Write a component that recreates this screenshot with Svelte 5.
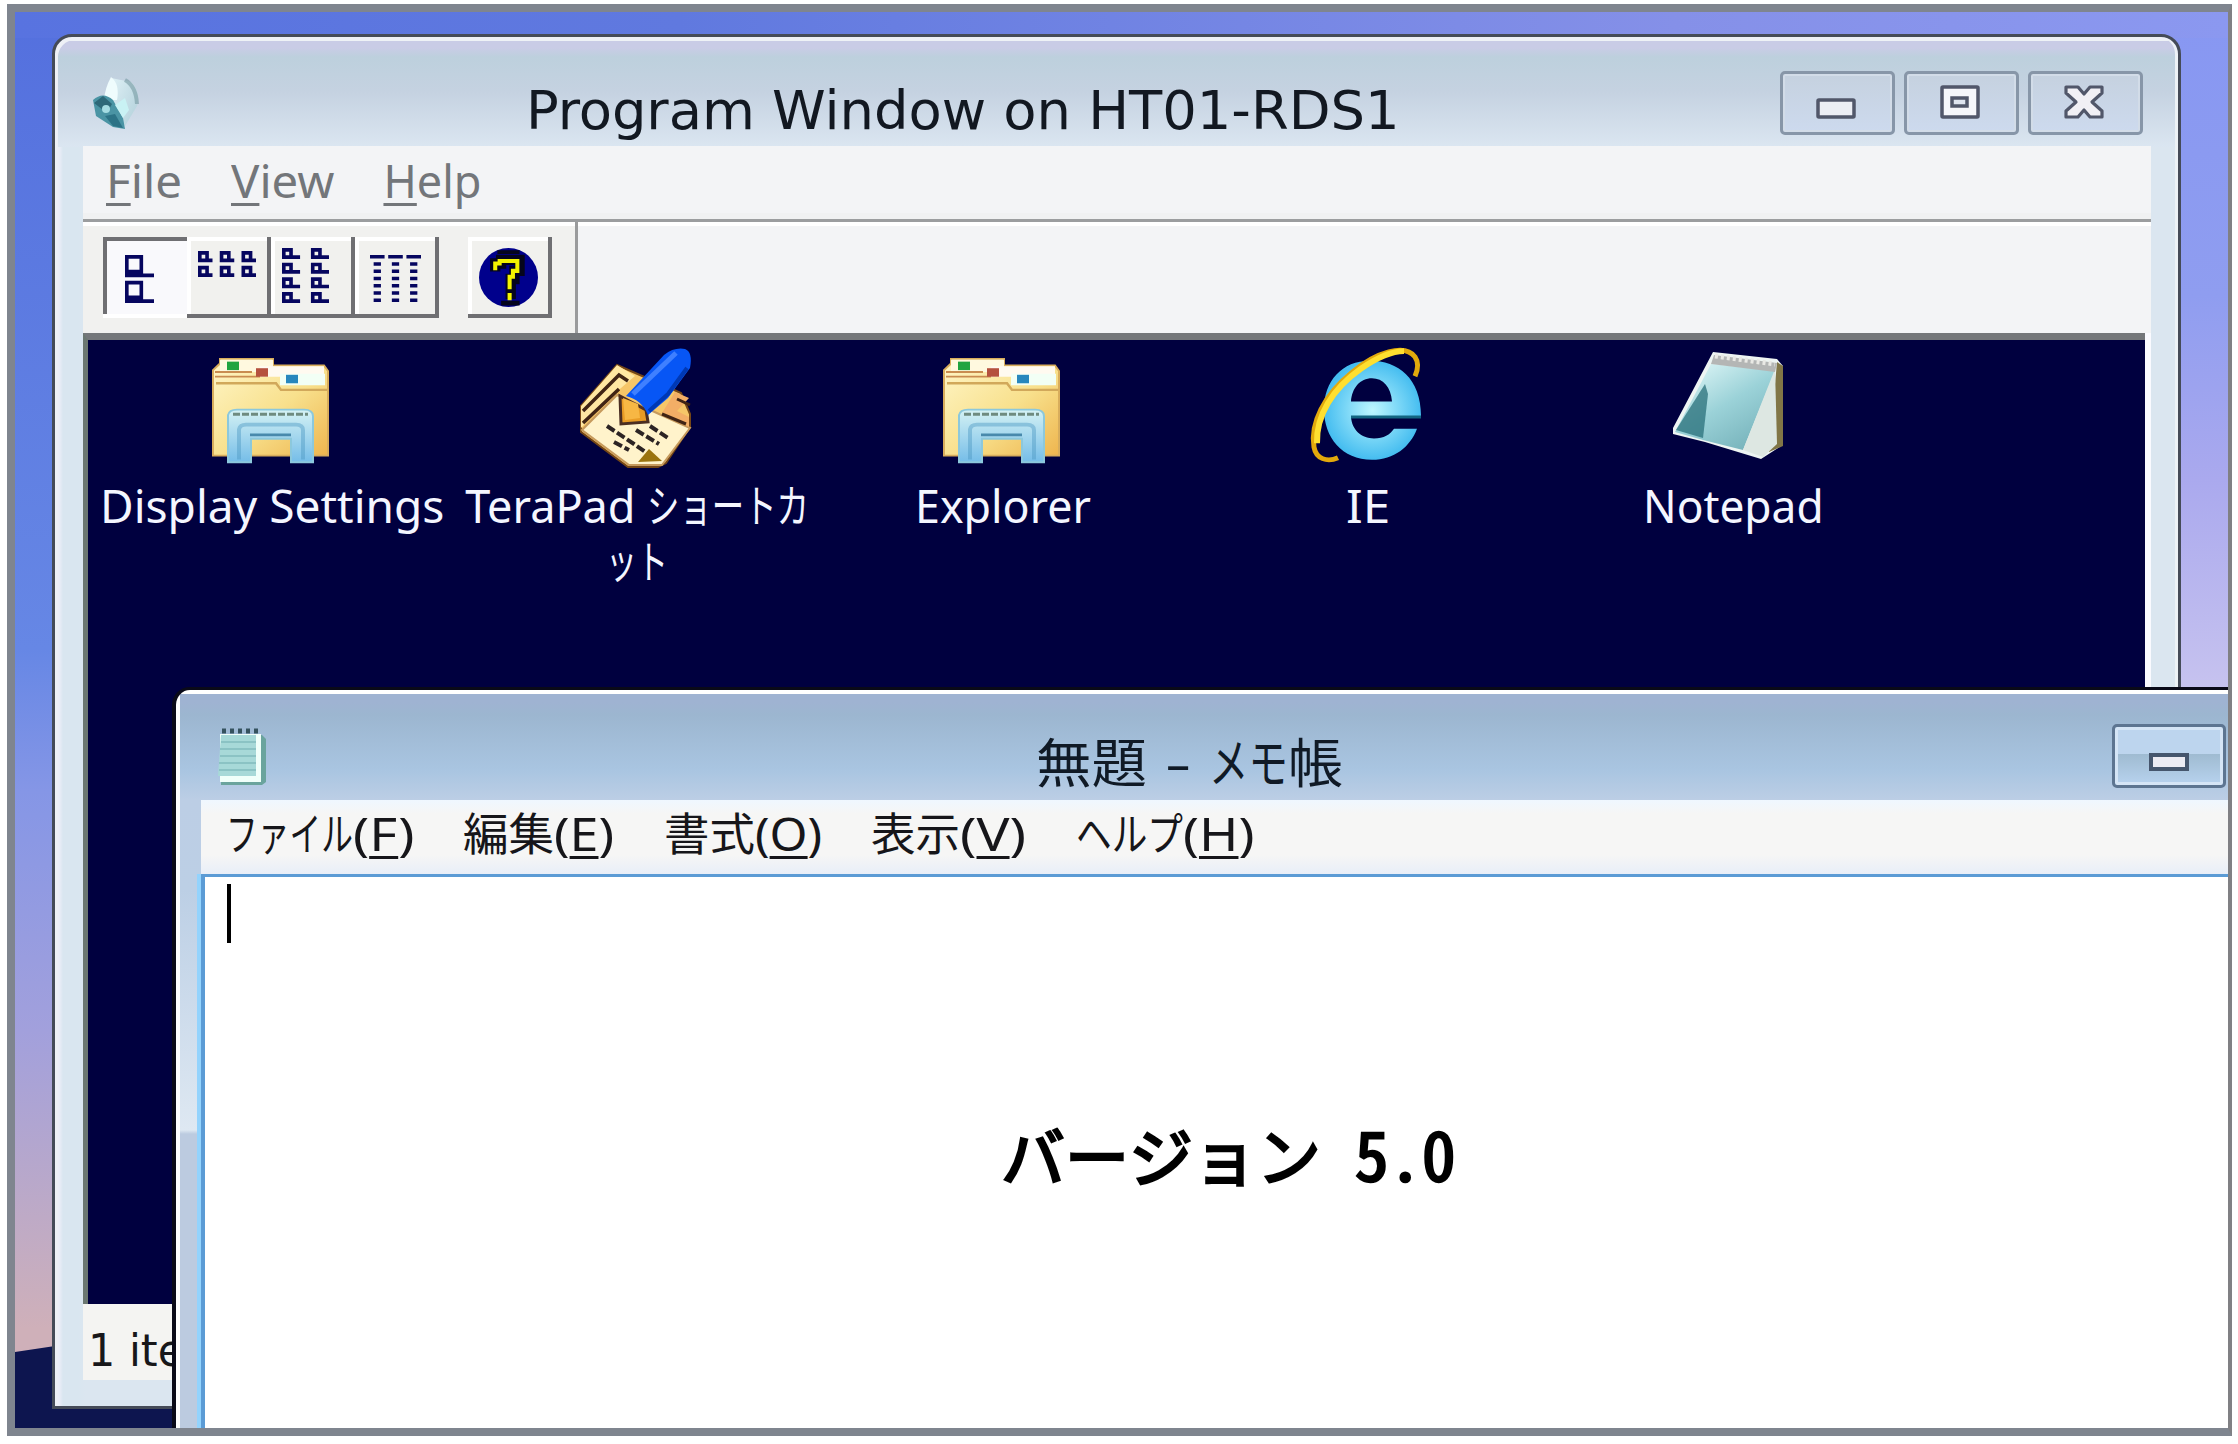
<script>
  // Stretches a run of text horizontally to the given advance width.
  function fit(node, width) {
    const natural = node.offsetWidth;
    node.style.transform = `scaleX(${width / natural})`;
    node.style.marginRight = `${width - natural}px`;
  }

  const menu = [
    { key: 'F', rest: 'ile', width: 76 },
    { key: 'V', rest: 'iew', width: 103 },
    { key: 'H', rest: 'elp', width: 98 }
  ];

  const shortcuts = [
    { icon: 'folder', lines: [[['Display Settings', 344]]] },
    { icon: 'terapad', lines: [[['TeraPad ', 182], ['ショートカ', 162]], [['ット', 62]]] },
    { icon: 'folder', lines: [[['Explorer', 176]]] },
    { icon: 'ie', lines: [[['IE', 44]]] },
    { icon: 'notepad', lines: [[['Notepad', 181]]] }
  ];

  const padMenu = [
    { text: 'ファイル', textWidth: 127, key: 'F', keyWidth: 61, slot: 237 },
    { text: '編集', textWidth: 91, key: 'E', keyWidth: 60, slot: 201 },
    { text: '書式', textWidth: 91, key: 'O', keyWidth: 67, slot: 207 },
    { text: '表示', textWidth: 89, key: 'V', keyWidth: 66, slot: 205 },
    { text: 'ヘルプ', textWidth: 107, key: 'H', keyWidth: 71, slot: 190 }
  ];

  const padTitle = [
    ['無題', 111],
    [' - ', 62],
    ['メモ', 79],
    ['帳', 55]
  ];

  const bigP = (x, y) => `M${x} ${y}h5v5h3v1h-8zm1 1v3h3v-3z`;
  const smallP = (x, y, w) => `M${x} ${y}h3v2h${w - 3}v1h-${w}zm1 1v1h1v-1z`;

  const large = bigP(0, 0) + bigP(0, 7);
  const small = [0, 6, 12].map((x) => smallP(x, 0, 4) + smallP(x, 4, 4)).join('');
  const list = [0, 8].map((x) => [0, 4, 8, 12].map((y) => smallP(x, y, 5)).join('')).join('');
  const detail =
    [0, 5, 10].map((x) => `M${x} 0h4v1h-4z`).join('') +
    [1, 6, 11].map((x) => [2, 4, 6, 8, 10, 12].map((y) => `M${x} ${y}h2v1h-2z`).join('')).join('');
</script>

<div class="screen">
  <div class="desktop">
    <div class="ground"></div>

    <section class="window program">
      <header class="titlebar">
        <svg class="app-icon" viewBox="0 0 54 56">
          <defs>
            <linearGradient id="body" x1="0" y1="0" x2="1" y2="1">
              <stop offset="0" stop-color="#e9fbfd" />
              <stop offset="1" stop-color="#a5cbd4" />
            </linearGradient>
          </defs>
          <path d="M20 2 L40 6 Q50 16 46 30 L34 50 L20 40Z" fill="url(#body)" opacity=".75" />
          <path d="M20 1 Q29 8 26 24 L13 24 Q14 12 20 1Z" fill="#effcfd" />
          <path d="M34 4 Q45 10 46 28" fill="none" stroke="#7799a2" stroke-width="4" opacity=".6" />
          <path d="M2 24 Q12 15 22 24 L32 42 L34 53 L22 51 L5 40Z" fill="#4a94a4" />
          <path d="M3 27 L12 20 L21 28 L16 37Z" fill="#2d6878" />
          <path d="M14 40 L24 38 L32 52 L22 50Z" fill="#2c7386" />
          <circle cx="15" cy="33" r="4" fill="#a4dce2" />
          <path d="M24 29 L34 22 L38 34 L32 42Z" fill="#c9f2f4" />
        </svg>
        <h1><span class="fit" use:fit={873}>Program Window on HT01-RDS1</span></h1>
        <div class="controls">
          <span class="control">
            <svg viewBox="0 0 40 34"><rect x="2" y="15" width="36" height="17" rx="1" fill="#eceef4" stroke="#51576a" stroke-width="3.5" /></svg>
          </span>
          <span class="control">
            <svg viewBox="0 0 40 34"><rect x="2" y="2" width="36" height="30" rx="1" fill="#f5f6fa" stroke="#51576a" stroke-width="3.5" /><rect x="12" y="13" width="15" height="8" fill="#dfe5f0" stroke="#51576a" stroke-width="3.5" /></svg>
          </span>
          <span class="control">
            <svg viewBox="0 0 40 34"><path d="M2 2H14L20 9L26 2H38V8L28 17L38 26V32H26L20 25L14 32H2V26L12 17L2 8Z" fill="#f1f0f5" stroke="#51576a" stroke-width="3.2" stroke-linejoin="round" /></svg>
          </span>
        </div>
      </header>

      <div class="content">
        <nav class="menubar">
          {#each menu as item}
            <span class="fit" use:fit={item.width}><u>{item.key}</u>{item.rest}</span>
          {/each}
        </nav>

        <div class="toolbar">
          <div class="tools">
            <span class="tool pressed"><svg width="29" height="48" viewBox="0 0 8 13" preserveAspectRatio="none"><path d={large} fill-rule="evenodd" /></svg></span>
            <span class="tool two"><svg width="58" height="26" viewBox="0 0 16 7" preserveAspectRatio="none"><path d={small} fill-rule="evenodd" /></svg></span>
            <span class="tool three"><svg width="47" height="55" viewBox="0 0 13 15" preserveAspectRatio="none"><path d={list} fill-rule="evenodd" /></svg></span>
            <span class="tool four"><svg width="51" height="47" viewBox="0 0 14 13" preserveAspectRatio="none"><path d={detail} /></svg></span>
            <span class="tool help">
              <svg width="59" height="59" viewBox="0 0 16 16">
                <circle cx="8" cy="8" r="8" fill="#00008c" />
                <path d="M5 0.6h6v1h-6zM6 14.3h5v1.3h-5z" fill="#05051c" />
                <path d="M4.4 6.4V4.2H6V3.2h5v3H9.6v2.2H8.6v5.4" fill="none" stroke="#05051c" stroke-width="2.8" />
                <path d="M4.4 6V4.2H5.6V3.5h4.8v2.7H9.2V7.8H8.3v3.4M8.3 12.2v2" fill="none" stroke="#f4f400" stroke-width="1.1" />
              </svg>
            </span>
          </div>
        </div>

        <div class="client">
          {#each shortcuts as item}
            <div class="shortcut">
              <svg class="icon" viewBox="0 0 118 118">
                {#if item.icon === 'folder'}
                  <defs>
                    <linearGradient id="manila" x1="0" y1="0" x2="1" y2="1">
                      <stop offset="0" stop-color="#fff6c8" />
                      <stop offset=".55" stop-color="#f8e08c" />
                      <stop offset="1" stop-color="#eeb54e" />
                    </linearGradient>
                    <linearGradient id="stand" x1="0" y1="0" x2="0" y2="1">
                      <stop offset="0" stop-color="#d5f2f4" />
                      <stop offset="1" stop-color="#75bde8" />
                    </linearGradient>
                  </defs>
                  <g transform="translate(-1 2) scale(1 .94)">
                    <path d="M1 15 L8 8 V3 H61 V10 H112 L116 16 V106 H1Z" fill="url(#manila)" stroke="#d8ad5c" stroke-width="2" />
                    <path d="M8 4H61V17H8Z" fill="#fff9df" />
                    <path d="M48 11H112V22H48Z" fill="#fffaf0" />
                    <path d="M3 22H48M3 17H40" stroke="#c98c50" stroke-width="2" />
                    <path d="M68 19H113V31H68Z" fill="#f2fff5" />
                    <path d="M4 29H64L69 36H115" fill="none" stroke="#d1a85a" stroke-width="2.5" />
                    <rect x="15" y="6" width="12" height="9" fill="#20a440" />
                    <rect x="44" y="13" width="12" height="9" fill="#b5513e" />
                    <rect x="74" y="20" width="12" height="9" fill="#2887bd" />
                    <path d="M16 63 Q17 57 25 57H92Q101 57 101 64V113H79V88H39V113H16Z" fill="url(#stand)" stroke="#8cc8dc" stroke-width="2" />
                    <path d="M21 62H96" stroke="#6f8b80" stroke-width="3" stroke-dasharray="7 2" />
                    <path d="M27 110V78Q28 73 34 73H84Q91 73 91 79V110" fill="none" stroke="#4e9ac4" stroke-width="4" opacity=".45" />
                    <path d="M38 84H79" stroke="#4889ac" stroke-width="3" />
                  </g>
                {:else if item.icon === 'terapad'}
                  <g transform="translate(0 -2)">
                    <path d="M39 13 L103 41 L112 62 V75 L88 111 L80 115 H50 L3 80 V54Z" fill="#f6c668" stroke="#744616" stroke-width="2" />
                    <path d="M39 13L3 54V76L29 48L57 24Z" fill="#ffe7a2" />
                    <path d="M5 59L41 23L50 29M5 71L41 37" fill="none" stroke="#402414" stroke-width="3.5" />
                    <path d="M39 43L112 76L84 113H51L4 78Z" fill="#fff3cb" stroke="#c69a5d" stroke-width="2" />
                    <path d="M29 74L56 92L73 104M36 90L51 98M58 78L81 92M72 74L90 86" fill="none" stroke="#2c2424" stroke-width="4" stroke-dasharray="9 3" />
                    <path d="M60 110L71 97L84 109Z" fill="#9a730f" />
                    <path d="M97 40L111 46L99 59L111 65V75L84 61Z" fill="#f3ae66" />
                    <path d="M84 62L108 72M99 47L112 53" stroke="#402414" stroke-width="3" />
                    <path d="M42 44L68 58L70 70L43 72Z" fill="#e99c26" stroke="#4b2e22" stroke-width="3" />
                    <path d="M45 46L60 52L62 66L47 68Z" fill="#f7b744" />
                    <path d="M48 44L86 3Q96-5 107-3Q115 0 112 16L90 46L70 63Q64 48 48 44Z" fill="#0756f5" />
                    <path d="M55 42L98 1" stroke="#3f80ff" stroke-width="5" fill="none" />
                    <path d="M71 59L90 42L109 16" stroke="#0038b4" stroke-width="4" fill="none" />
                  </g>
                {:else if item.icon === 'ie'}
                  <defs>
                    <radialGradient id="blue">
                      <stop offset="0" stop-color="#bdf7ff" />
                      <stop offset="1" stop-color="#45bdf0" />
                    </radialGradient>
                  </defs>
                  <g transform="translate(1 0) scale(1 .97)">
                    <path fill-rule="evenodd" d="M60 7C88 7 111 25 111 64V65H41C42 78 51 87 64 87C74 87 80 83 84 77H107C100 96 84 109 62 109C32 109 14 86 14 57C14 28 32 7 60 7ZM41 49H82C81 34 73 25 62 25C50 25 42 35 41 49Z" fill="url(#blue)" />
                    <path d="M41 65H111" stroke="#126581" stroke-width="3" />
                    <path d="M28 107C17 112 6 108 4 96C0 72 14 42 42 19C66-2 95-11 105 3C109 9 108 16 105 23" fill="none" stroke="#e2a90c" stroke-width="5" />
                    <path d="M7 92C6 64 22 36 51 15C68 3 83-3 94-3" fill="none" stroke="#ffdf30" stroke-width="6" />
                  </g>
                {:else}
                  <defs>
                    <linearGradient id="glass" x1="0" y1="0" x2=".7" y2="1">
                      <stop offset="0" stop-color="#e8fbfb" />
                      <stop offset=".55" stop-color="#9bd2d8" />
                      <stop offset="1" stop-color="#78b4bc" />
                    </linearGradient>
                  </defs>
                  <g transform="translate(-4 0)">
                    <path d="M42 -2L106 5L112 12L110 92L90 105L34 88L2 80L2 74Z" fill="#eef5f3" />
                    <path d="M106 8L112 12V92L98 98Z" fill="#817647" />
                    <path d="M40 10L104 17L72 96L32 86L4 78Z" fill="url(#glass)" />
                    <path d="M34 30L37 40L32 84L5 76Z" fill="#286f79" opacity=".75" />
                    <path d="M104 15L106 90L92 103L72 96Z" fill="#dde7e2" />
                    <path d="M43 1L106 9L104 18L40 10Z" fill="#b4b6b5" />
                    <path d="M44 2L104 10" stroke="#e9e9e5" stroke-width="5" stroke-dasharray="3 3" />
                  </g>
                {/if}
              </svg>
              {#each item.lines as parts}
                <div class="caption">{#each parts as [text, width]}<span class="fit" use:fit={width}>{text}</span>{/each}</div>
              {/each}
            </div>
          {/each}
        </div>

        <footer class="status"><span class="fit" use:fit={194}>1 item(s)</span></footer>
      </div>
    </section>

    <section class="window memo">
      <header class="memo-title">
        <svg class="memo-icon" viewBox="0 0 50 58">
          <path d="M5 7H45L49 11V54L45 57H4Z" fill="#6aa49d" />
          <path d="M3 6H44V54H3Z" fill="#f0fffa" />
          <path d="M4 7H39V48H1Z" fill="#a7d9d8" />
          <path d="M4 14H39M3 21H39M3 28H39M2 35H39M2 42H39" stroke="#83bcbd" stroke-width="1.5" />
          <path d="M5 3H41" stroke="#35525e" stroke-width="5" stroke-dasharray="4 4" />
        </svg>
        <h2>{#each padTitle as [text, width]}<span class="fit" use:fit={width}>{text}</span>{/each}</h2>
        <span class="memo-min">
          <svg width="40" height="18" viewBox="0 0 40 18"><rect x="2" y="2" width="36" height="14" fill="#ecebf2" stroke="#46566d" stroke-width="4" /></svg>
        </span>
      </header>
      <nav class="memo-menu">
        {#each padMenu as item}
          <span class="memo-item" style:width="{item.slot}px"><span class="fit" use:fit={item.textWidth}>{item.text}</span><span class="fit" use:fit={item.keyWidth}>(<u>{item.key}</u>)</span></span>
        {/each}
      </nav>
      <div class="editor">
        <i class="caret"></i>
        <p><span>バージョン</span><span class="fit number" use:fit={101}>5.0</span></p>
      </div>
    </section>
  </div>
</div>

<style>
  :global(body) {
    background: #fff;
  }
  * {
    box-sizing: border-box;
  }
  .screen {
    width: 2238px;
    height: 1444px;
    padding: 4px 6px 8px 7px;
    overflow: hidden;
    font-family: 'Noto Sans', 'Noto Sans CJK JP', sans-serif;
  }
  .desktop {
    position: relative;
    width: 2225px;
    height: 1432px;
    overflow: hidden;
    border: 8px solid #7f858f;
    border-right: 4px solid #808084;
    background:
      linear-gradient(90deg, #5873e0 0, #6079df 30%, #8590e8 75%, #8b98f0 100%) top / 100% 26px no-repeat,
      linear-gradient(180deg, #8797f2, #8f9df0 20%, #aaa9ee 33%, #c7c3ef 48%) right / 60px 100% no-repeat,
      linear-gradient(180deg, #5470de, #6687e5 45%, #8596e6 55%, #a2a0dc 72%, #cfb0b9 93%);
  }
  .ground {
    position: absolute;
    left: 0;
    right: 0;
    bottom: 0;
    height: 82px;
    background: #0d154f;
    clip-path: polygon(0 6px, 40px 0, 100% 0, 100% 100%, 0 100%);
  }
  .window {
    position: absolute;
    display: flex;
    flex-direction: column;
  }
  .fit {
    display: inline-block;
    flex: none;
    white-space: pre;
    transform-origin: 0 50%;
  }
  .program {
    left: 37px;
    top: 22px;
    width: 2129px;
    height: 1375px;
    padding: 0 27px 26px 28px;
    border: 3px solid #454b58;
    border-radius: 20px 20px 0 0;
    background:
      linear-gradient(#eef2f6 0 4px, #c9cce6 4px 11px, #bdd0dd 20px, #c5d2e1 55px, #dbe6f1 110px, transparent 110px) no-repeat,
      linear-gradient(90deg, #eceef8 0 4px, #d9e6f0 8px 24px, #dbe6f0 30px) no-repeat,
      #dbe6f0;
    box-shadow: inset 3px 3px 0 #eef0f6, inset -3px 0 0 #edf2f6;
  }
  .titlebar {
    display: flex;
    height: 110px;
    padding: 34px 7px 0 8px;
  }
  .app-icon {
    width: 54px;
    height: 56px;
    margin-top: 5px;
  }
  h1,
  h2,
  p {
    margin: 0;
    font-weight: 400;
  }
  h1 {
    width: 1254px;
    margin: 8px 0 0 381px;
    font: 400 54px/64px 'DejaVu Sans Condensed', 'DejaVu Sans', sans-serif;
    color: #121821;
  }
  .controls {
    display: flex;
    gap: 9px;
  }
  .control {
    display: flex;
    justify-content: center;
    width: 115px;
    height: 64px;
    padding: 11px 4px 0 0;
    border: 3px solid #8796a8;
    border-radius: 5px;
    background: linear-gradient(#c5d1df, #cddaee);
    box-shadow: inset 0 0 0 2px #d2dce8;
  }
  .control svg {
    width: 40px;
    height: 34px;
  }
  .content {
    display: flex;
    flex: 1;
    flex-direction: column;
    width: 2068px;
    background: #f3f4f6;
  }
  .menubar {
    display: flex;
    gap: 49px;
    height: 73px;
    padding: 7px 0 0 23px;
    border-bottom: 6px solid #f0f1f2;
    font-size: 45px;
    line-height: 56px;
    color: #73767a;
  }
  u {
    text-decoration-thickness: 3px;
    text-underline-offset: 5px;
    text-decoration-skip-ink: none;
  }
  .toolbar {
    height: 114px;
    border-top: 3px solid #9b9d9f;
    box-shadow: inset 0 4px 0 #fff;
  }
  .tools {
    display: flex;
    width: 495px;
    height: 111px;
    padding: 15px 0 0 20px;
    border-right: 3px solid #9a9b9c;
    background: linear-gradient(#fff 0 4px, #f1f1ef 4px);
  }
  .tool {
    flex: none;
    width: 84px;
    height: 81px;
    border: solid #6f6f72;
    border-width: 0 4px 4px 0;
    background: #f1f1ee;
    box-shadow: inset 4px 4px 0 #fff;
    fill: #06065f;
  }
  .tool svg {
    display: block;
  }
  .pressed {
    padding: 14px 0 0 18px;
    height: 77px;
    border-width: 4px 0 0 4px;
    background: #f9f9fc;
    box-shadow: 0 4px 0 #fff;
  }
  .two {
    padding: 14px 0 0 11px;
  }
  .three {
    padding: 11px 0 0 11px;
  }
  .four {
    padding: 18px 0 0 15px;
  }
  .help {
    margin-left: 29px;
    padding: 11px 0 0 11px;
  }
  .client {
    display: flex;
    width: 2062px;
    height: 971px;
    padding: 10px 0 0 1px;
    border-top: 7px solid #74777a;
    border-left: 5px solid #6b7771;
    background: #00003f;
    box-shadow: 6px 0 0 #fafaff;
  }
  .shortcut {
    display: flex;
    flex: none;
    flex-direction: column;
    align-items: center;
    width: 365.5px;
    color: #f4f6ff;
    font-size: 45px;
  }
  .icon {
    width: 118px;
    height: 118px;
    margin: 4px 0 6px;
    overflow: visible;
  }
  .caption {
    display: flex;
    height: 56px;
    line-height: 56px;
  }
  .status {
    height: 76px;
    overflow: hidden;
    padding: 19px 0 0 5px;
    font: 44px/56px 'DejaVu Sans Condensed', 'DejaVu Sans', sans-serif;
    color: #17171a;
    background: #f4f4f2;
  }
  .memo {
    left: 157px;
    top: 675px;
    width: 2060px;
    height: 749px;
    padding-left: 25px;
    border: 4px solid #0a0a18;
    border-width: 3px 0 0 4px;
    border-radius: 18px 0 0 0;
    background:
      linear-gradient(90deg, #fff 0 4px, transparent 4px) no-repeat,
      linear-gradient(#fff 0 4px, #9fb3d2 4px 12px, #9cb6d0 25px, #a9c5e1 80px, #bccee5 110px, #bccfe5 200px, #dee8f2 440px, #bccbe0 444px) no-repeat;
  }
  .memo-title {
    display: flex;
    height: 110px;
    padding: 34px 0 0 16px;
  }
  .memo-icon {
    width: 50px;
    height: 58px;
    margin-top: 4px;
  }
  h2 {
    display: flex;
    width: 1076px;
    margin: 4px 0 0 769px;
    font: 400 53px/64px 'Noto Sans CJK JP', sans-serif;
    color: #101a26;
  }
  .memo-min {
    display: flex;
    flex: none;
    justify-content: center;
    width: 114px;
    height: 64px;
    padding-top: 26px;
    border: 3px solid #5d7591;
    border-radius: 5px;
    background: linear-gradient(#bdd5ee 0 27px, #9fbbd1 27px, #b8d3ef);
    box-shadow: inset 0 0 0 3px #d5e5f6;
  }
  .memo-menu {
    display: flex;
    height: 74px;
    padding: 4px 0 0 25px;
    font: 45px/60px 'Noto Sans', 'Noto Sans CJK JP', sans-serif;
    color: #16161a;
    background: linear-gradient(#eff7ff, #f6f6f5 14px 55px, #e8eef8);
  }
  .memo-item {
    display: flex;
    flex: none;
  }
  .editor {
    flex: 1;
    padding-top: 7px;
    border: solid #5b9bd5;
    border-width: 3px 0 0 4px;
    background: #fff;
    box-shadow: -4px 0 0 #93d3fd;
  }
  .caret {
    display: block;
    width: 4px;
    height: 59px;
    margin-left: 22px;
    background: #000;
  }
  p {
    display: flex;
    gap: 34px;
    align-items: baseline;
    margin: 161px 0 0 796px;
    font: 400 64px/96px 'Noto Sans Mono CJK JP', 'Noto Sans CJK JP', monospace;
    color: #000;
    -webkit-text-stroke: 2.6px #000;
  }
  .number {
    font-size: 67px;
  }
</style>
